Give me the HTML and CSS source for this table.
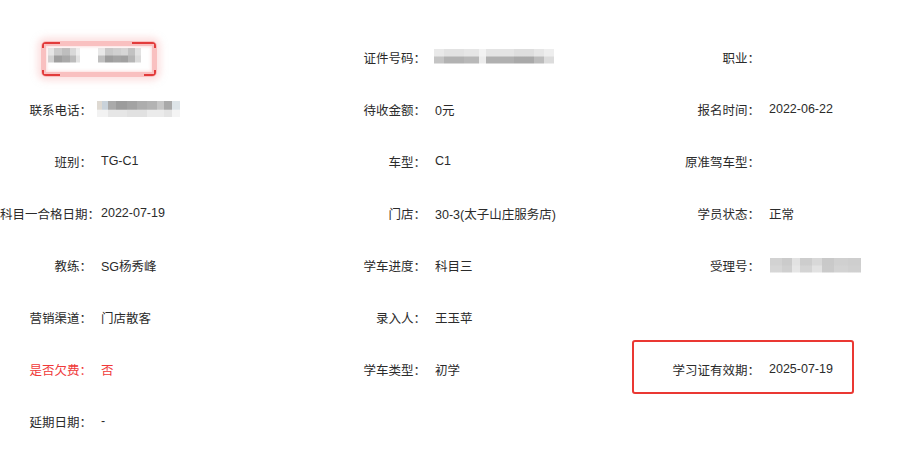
FILE: index.html
```html
<!DOCTYPE html>
<html lang="zh-CN">
<head>
<meta charset="utf-8">
<title>学员信息</title>
<link rel="stylesheet" href="styles.css">
</head>
<body>
<div class="info">
  <div class="cell">
    <span class="mosaic m-name1"></span><span class="mosaic m-name2"></span>
    <span class="mark-soft"></span>
  </div>
  <div class="cell"><span class="label">证件号码：</span><span class="value"><span class="mosaic m-id"></span></span></div>
  <div class="cell"><span class="label">职业：</span><span class="value"></span></div>

  <div class="cell"><span class="label">联系电话：</span><span class="value"><span class="mosaic m-phone"></span></span></div>
  <div class="cell"><span class="label">待收金额：</span><span class="value">0元</span></div>
  <div class="cell"><span class="label">报名时间：</span><span class="value">2022-06-22</span></div>

  <div class="cell"><span class="label">班别：</span><span class="value">TG-C1</span></div>
  <div class="cell"><span class="label">车型：</span><span class="value">C1</span></div>
  <div class="cell"><span class="label">原准驾车型：</span><span class="value"></span></div>

  <div class="cell"><span class="label">科目一合格日期：</span><span class="value">2022-07-19</span></div>
  <div class="cell"><span class="label">门店：</span><span class="value">30-3(太子山庄服务店)</span></div>
  <div class="cell"><span class="label">学员状态：</span><span class="value">正常</span></div>

  <div class="cell"><span class="label">教练：</span><span class="value">SG杨秀峰</span></div>
  <div class="cell"><span class="label">学车进度：</span><span class="value">科目三</span></div>
  <div class="cell"><span class="label">受理号：</span><span class="value"><span class="mosaic m-accept"></span></span></div>

  <div class="cell"><span class="label">营销渠道：</span><span class="value">门店散客</span></div>
  <div class="cell"><span class="label">录入人：</span><span class="value">王玉苹</span></div>
  <div class="cell"></div>

  <div class="cell red"><span class="label">是否欠费：</span><span class="value">否</span></div>
  <div class="cell"><span class="label">学车类型：</span><span class="value">初学</span></div>
  <div class="cell"><span class="label">学习证有效期：</span><span class="value">2025-07-19</span><span class="mark-box"></span></div>

  <div class="cell"><span class="label">延期日期：</span><span class="value">-</span></div>
</div>
</body>
</html>
```

FILE: styles.css
```css
html, body {
  margin: 0;
  background: #ffffff;
}
body {
  font-family: "Liberation Sans", "Noto Sans CJK SC", sans-serif;
  font-size: 12.5px;
  color: #2b2b2b;
  overflow: hidden;
  width: 916px;
  height: 450px;
}
.info {
  display: grid;
  grid-template-columns: 334px 334px 1fr;
  grid-auto-rows: 52px;
  padding-top: 31px;
}
.cell {
  display: flex;
  align-items: center;
  position: relative;
  min-width: 0;
}
.label {
  display: block;
  width: 92px;
  flex: none;
  text-align: right;
  white-space: nowrap;
}
.value {
  display: flex;
  align-items: center;
  margin-left: 9px;
  white-space: nowrap;
}
.red {
  color: #f03a3a;
}

/* pixelated (mosaic) blocks */
.mosaic {
  display: inline-block;
  height: 16px;
  flex: none;
}
.m-name1 {
  margin-left: 48px;
  margin-top: -4px;
  width: 32px;
  height: 15px;
  background:
    linear-gradient(to right, #e6e6e6 0 6px, #cbcbcb 6px 14px, #bebebe 14px 22px, #d9d9d9 22px 28px, #eeeeee 28px) top / 100% 50% no-repeat,
    linear-gradient(to right, #d2d2d2 0 6px, #9f9f9f 6px 14px, #a9a9a9 14px 22px, #bcbcbc 22px 28px, #e2e2e2 28px) bottom / 100% 50% no-repeat;
}
.m-name2 {
  margin-left: 18px;
  margin-top: -4px;
  width: 43px;
  height: 15px;
  background:
    linear-gradient(to right, #e8e8e8 0 7px, #c9c9c9 7px 15px, #d0d0d0 15px 23px, #d6d6d6 23px 30px, #c2c2c2 30px 37px, #e2e2e2 37px) top / 100% 50% no-repeat,
    linear-gradient(to right, #bfbfbf 0 7px, #9d9d9d 7px 15px, #a4a4a4 15px 23px, #a1a1a1 23px 30px, #b6b6b6 30px 37px, #dadada 37px) bottom / 100% 50% no-repeat;
}
.m-phone {
  margin-left: -4px;
  width: 83px;
  background:
    linear-gradient(to right, #ded9d2 0 5px, #c9d2da 5px 11px, #aaaaaa 11px 19px, #9c9c9c 19px 30px, #a3a3a3 30px 40px, #adadad 40px 50px, #b3b3b3 50px 60px, #c6c6c6 60px 67px, #a9a9a9 67px 75px, #dde4e8 75px) top / 100% 55% no-repeat,
    linear-gradient(to right, #f2f2f2 0 11px, #e6e6e6 11px 30px, #e1e1e1 30px 50px, #ebebeb 50px 67px, #e4e4e4 67px 75px, #f4f4f4 75px) bottom / 100% 45% no-repeat;
}
.m-id {
  margin-left: -1px;
  margin-top: -2px;
  width: 120px;
  height: 15px;
  background:
    linear-gradient(to right, #e9e9e9 0 10px, #e2e2e2 10px 30px, #e6e6e6 30px 45px, #f2f2f2 45px 52px, #e4e4e4 52px 80px, #dedede 80px 100px, #e6e6e6 100px 110px, #eeeeee 110px) top / 100% 50% no-repeat,
    linear-gradient(to right, #c4c4c4 0 10px, #b2b2b2 10px 30px, #b8b8b8 30px 45px, #ececec 45px 52px, #b0b0b0 52px 80px, #a9a9a9 80px 100px, #bcbcbc 100px 110px, #dcdcdc 110px) bottom / 100% 50% no-repeat;
}
.m-accept {
  margin-left: 1px;
  width: 91px;
  height: 15px;
  background:
    linear-gradient(to right, #d2d2d2 0 12px, #cbcbcb 12px 22px, #e2e2e2 22px 30px, #cdcdcd 30px 42px, #d8d8d8 42px 52px, #c9c9c9 52px 64px, #d0d0d0 64px 78px, #cecece 78px) top / 100% 50% no-repeat,
    linear-gradient(to right, #d6d6d6 0 12px, #cfcfcf 12px 22px, #e6e6e6 22px 30px, #d4d4d4 30px 42px, #e2e2e2 42px 52px, #cacaca 52px 64px, #d3d3d3 64px 78px, #d0d0d0 78px) bottom / 100% 50% no-repeat;
}

/* highlight marks drawn over the content */
.mark-soft {
  position: absolute;
  left: 41px;
  top: 10px;
  width: 116px;
  height: 36px;
  box-sizing: border-box;
  border: 5px solid rgba(245, 150, 150, 0.6);
  border-radius: 5px;
  box-shadow: 0 0 6px 4px rgba(250, 200, 200, 0.5), inset 0 0 3px 1px rgba(250, 190, 190, 0.5);
  pointer-events: none;
}
.mark-soft::before {
  content: "";
  position: absolute;
  inset: -4px;
  border-radius: 4px;
  background:
    linear-gradient(#e23b3b, #e23b3b) left top / 18px 2px no-repeat,
    linear-gradient(#e23b3b, #e23b3b) left top / 2px 6px no-repeat,
    linear-gradient(#e23b3b, #e23b3b) left bottom / 18px 2px no-repeat,
    linear-gradient(#e23b3b, #e23b3b) left bottom / 2px 6px no-repeat,
    linear-gradient(#e23b3b, #e23b3b) right top / 24px 2px no-repeat,
    linear-gradient(#e23b3b, #e23b3b) right top / 2px 6px no-repeat,
    linear-gradient(#e23b3b, #e23b3b) right bottom / 12px 2px no-repeat,
    linear-gradient(#e23b3b, #e23b3b) right bottom / 2px 6px no-repeat;
}
.mark-box {
  position: absolute;
  left: -36px;
  top: -3px;
  width: 222px;
  height: 54px;
  box-sizing: border-box;
  border: 2px solid #ea3833;
  border-radius: 3px;
  pointer-events: none;
}
```
